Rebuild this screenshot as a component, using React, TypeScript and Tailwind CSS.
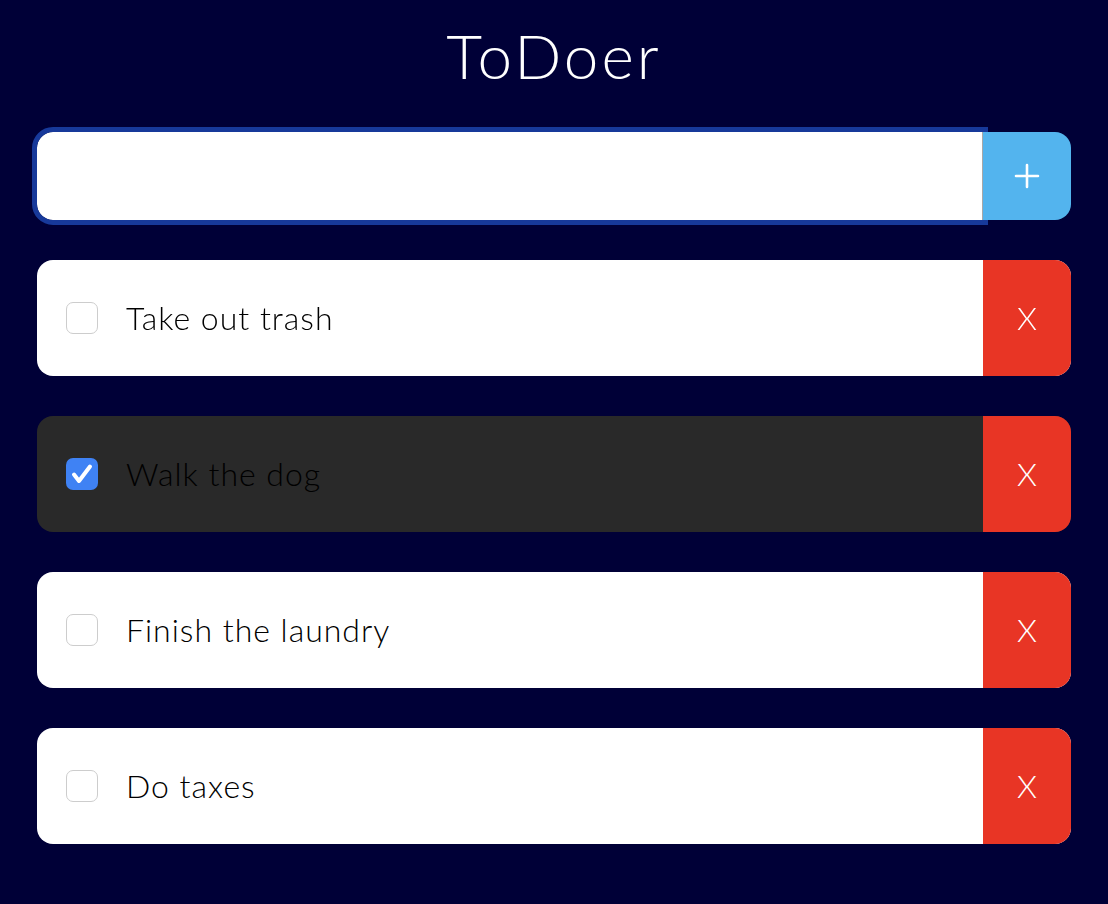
import { useState } from "react";

type Todo = { id: number; text: string; done: boolean };

const initialTodos: Todo[] = [
  { id: 1, text: "Take out trash", done: false },
  { id: 2, text: "Walk the dog", done: true },
  { id: 3, text: "Finish the laundry", done: false },
  { id: 4, text: "Do taxes", done: false },
];

function Check({ checked, onToggle }: { checked: boolean; onToggle: () => void }) {
  return (
    <button
      type="button"
      onClick={onToggle}
      className={
        checked
          ? "w-8 h-8 rounded-[7px] bg-[#3f82f4] flex items-center justify-center shrink-0"
          : "w-8 h-8 rounded-[7px] bg-white border border-[#cdcdcd] shrink-0"
      }
    >
      {checked && (
        <svg width="24" height="24" viewBox="0 0 24 24" fill="none">
          <path d="M4 12.5l5 6.5L20 4.5" stroke="white" strokeWidth="4" strokeLinecap="round" strokeLinejoin="round" />
        </svg>
      )}
    </button>
  );
}

export default function App() {
  const [todos, setTodos] = useState<Todo[]>(initialTodos);
  const [text, setText] = useState("");

  const add = () => {
    if (!text.trim()) return;
    setTodos([...todos, { id: Date.now(), text, done: false }]);
    setText("");
  };

  return (
    <div className="min-h-[904px] w-full bg-[#000037] px-[37px] pt-[16px] font-['Lato','Open_Sans',sans-serif]">
      <h1 className="text-center text-white text-[62px] font-light leading-[78px] tracking-[3px]">ToDoer</h1>

      <div className="mt-[38px] flex h-[88px]">
        <input
          autoFocus
          value={text}
          onChange={(e) => setText(e.target.value)}
          className="flex-1 h-full bg-white rounded-l-[16px] border-r border-[#a8a8a8] outline outline-[5px] outline-[#17399a] px-5 text-[32px]"
        />
        <button
          type="button"
          onClick={add}
          className="relative z-10 w-[88px] h-full bg-[#53b4ee] rounded-r-[16px] flex items-center justify-center"
        >
          <svg width="26" height="26" viewBox="0 0 26 26">
            <path d="M13 2v22M2 13h22" stroke="white" strokeWidth="2.6" strokeLinecap="round" />
          </svg>
        </button>
      </div>

      <ul className="mt-[40px] flex flex-col gap-[40px]">
        {todos.map((t) => (
          <li
            key={t.id}
            className={
              t.done
                ? "flex h-[116px] rounded-[16px] overflow-hidden bg-[#292929]"
                : "flex h-[116px] rounded-[16px] overflow-hidden bg-white"
            }
          >
            <div className="flex-1 flex items-center pl-[29px] gap-[28px]">
              <Check
                checked={t.done}
                onToggle={() =>
                  setTodos(todos.map((x) => (x.id === t.id ? { ...x, done: !x.done } : x)))
                }
              />
              <span className="text-[32px] font-light text-black tracking-[1px]">{t.text}</span>
            </div>
            <button
              type="button"
              onClick={() => setTodos(todos.filter((x) => x.id !== t.id))}
              className="w-[88px] bg-[#e83525] text-white text-[32px] font-light flex items-center justify-center"
            >
              X
            </button>
          </li>
        ))}
      </ul>
    </div>
  );
}
